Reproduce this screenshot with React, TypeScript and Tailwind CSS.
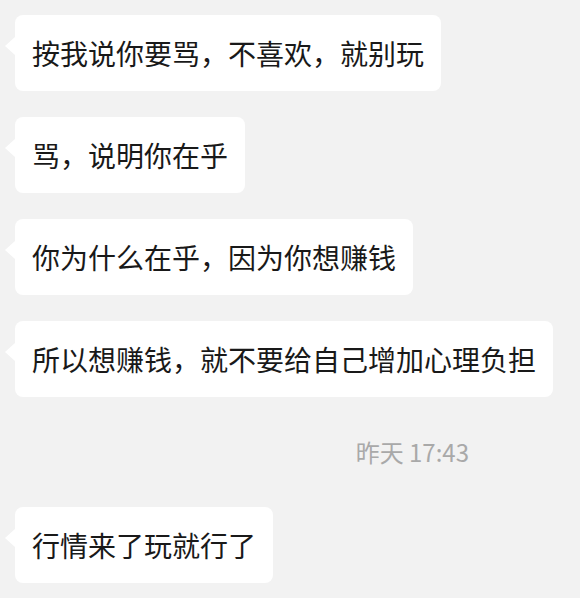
import React from "react";

const font = { fontFamily: '"Noto Sans CJK SC", "Noto Sans", sans-serif' };

function Bubble({ text }: { text: string }) {
  return (
    <div className="relative flex h-[76px] items-center rounded-[8px] bg-white px-[17px] text-[28px] leading-[40px] text-[#191919]">
      <div className="absolute left-[-10px] top-[22px] h-0 w-0 border-y-[9px] border-r-[10px] border-y-transparent border-r-white" />
      <span className="whitespace-nowrap">{text}</span>
    </div>
  );
}

export default function App() {
  return (
    <div
      className="flex h-[598px] w-[580px] flex-col items-start overflow-hidden bg-[#f2f2f2] pl-[15px] pt-[15px]"
      style={font}
    >
      <div className="flex flex-col items-start gap-[26px]">
        <Bubble text="按我说你要骂，不喜欢，就别玩" />
        <Bubble text="骂，说明你在乎" />
        <Bubble text="你为什么在乎，因为你想赚钱" />
        <Bubble text="所以想赚钱，就不要给自己增加心理负担" />
      </div>
      <div className="mt-[39px] flex h-[32px] w-full items-center justify-end pr-[111px] text-[24px] leading-[32px] text-[#a9a9a9]">
        昨天 17:43
      </div>
      <div className="mt-[39px]">
        <Bubble text="行情来了玩就行了" />
      </div>
    </div>
  );
}
